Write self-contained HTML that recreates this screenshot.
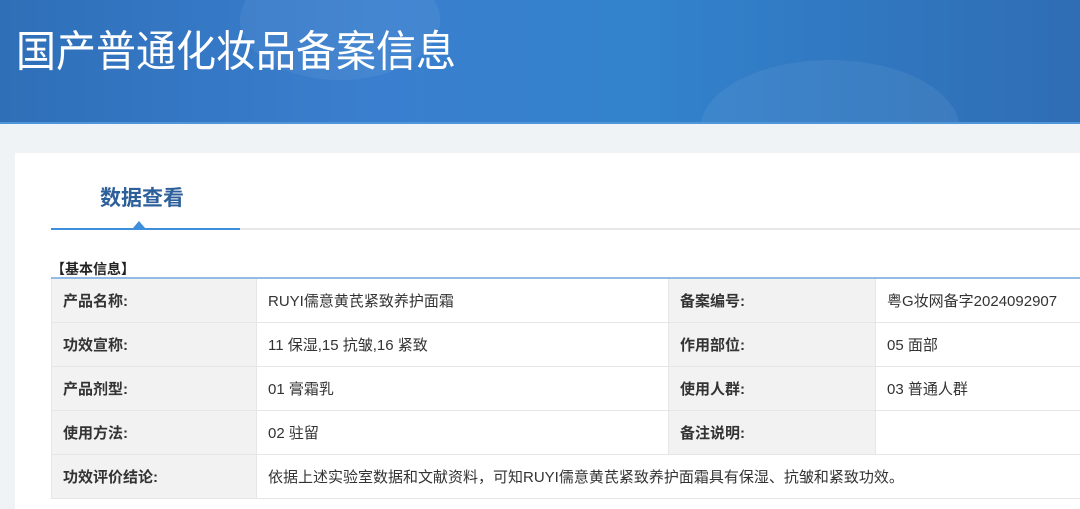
<!DOCTYPE html>
<html><head><meta charset="utf-8"><style>
*{margin:0;padding:0;box-sizing:border-box}
body{width:1080px;height:509px;overflow:hidden;background:#eff3f6;font-family:"Liberation Sans","Noto Sans CJK SC",sans-serif;position:relative}
.hd{position:absolute;left:0;top:0;width:1080px;height:124px;background:linear-gradient(90deg,#2f6fb8 0%,#3a7fcf 35%,#3282cc 60%,#2f6db4 100%);overflow:hidden;border-bottom:2px solid #4f95da}
.hd i{position:absolute;border-radius:50%;background:rgba(255,255,255,0.06)}
.hd h1{position:absolute;left:16px;top:17px;color:#fff;font-weight:normal;font-size:40px;font-family:"Noto Sans CJK SC",sans-serif;transform:scaleY(1.08);transform-origin:top left}
.panel{position:absolute;left:15px;top:153px;width:1065px;height:356px;background:#fff}
.tab{position:absolute;left:100px;top:182px;color:#2d5f9a;font-weight:bold;font-size:21px}
.tl{position:absolute;left:51px;top:228px;width:1029px;height:2px;background:#e8e8e8}
.tl b{position:absolute;left:0;top:0;width:189px;height:2px;background:#3d8edb}
.tri{position:absolute;left:133px;top:221px;width:0;height:0;border-left:6px solid transparent;border-right:6px solid transparent;border-bottom:7px solid #3d8edb}
.sec{position:absolute;left:51px;top:259px;font-size:14px;font-weight:bold;color:#222}
table{position:absolute;left:51px;top:277px;width:1040px;border-collapse:collapse;border-top:2px solid #92bbe5;font-size:15px;color:#333}
td{border:1px solid #e6e6e6;height:44px;padding:0 0 0 11px}
td.l{background:#f2f2f2;font-weight:bold;width:205px}
td.v{width:412px}
</style></head><body>
<div class="hd"><i style="left:240px;top:-40px;width:200px;height:120px"></i><i style="left:700px;top:60px;width:260px;height:140px"></i><h1>国产普通化妆品备案信息</h1></div>
<div class="panel"></div>
<div class="tab">数据查看</div>
<div class="tl"><b></b></div>
<div class="tri"></div>
<div class="sec">【基本信息】</div>
<table>
<tr><td class="l">产品名称:</td><td class="v">RUYI儒意黄芪紧致养护面霜</td><td class="l" style="width:207px">备案编号:</td><td>粤G妆网备字2024092907</td></tr>
<tr><td class="l">功效宣称:</td><td class="v">11 保湿,15 抗皱,16 紧致</td><td class="l">作用部位:</td><td>05 面部</td></tr>
<tr><td class="l">产品剂型:</td><td class="v">01 膏霜乳</td><td class="l">使用人群:</td><td>03 普通人群</td></tr>
<tr><td class="l">使用方法:</td><td class="v">02 驻留</td><td class="l">备注说明:</td><td></td></tr>
<tr><td class="l" style="height:42px">功效评价结论:</td><td colspan="3">依据上述实验室数据和文献资料，可知RUYI儒意黄芪紧致养护面霜具有保湿、抗皱和紧致功效。</td></tr>
</table>
</body></html>
